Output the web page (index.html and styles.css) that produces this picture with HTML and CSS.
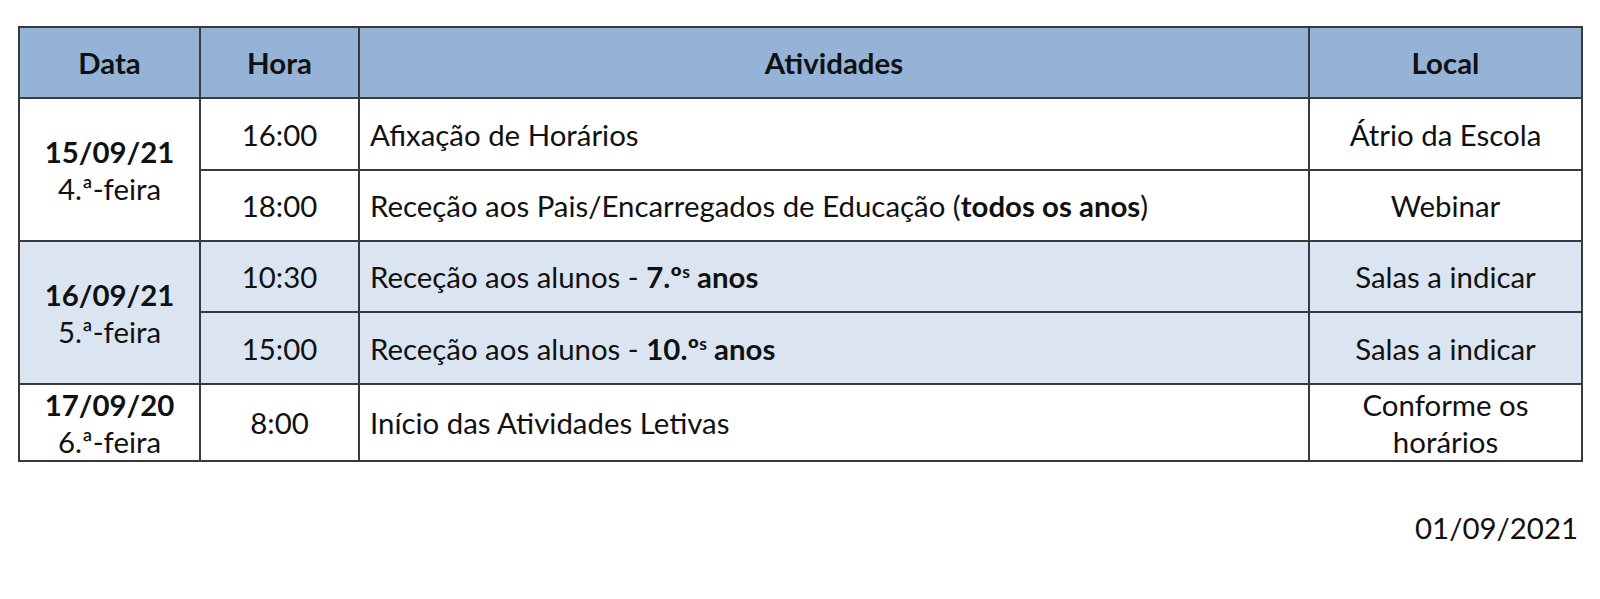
FILE: index.html
```html
<!DOCTYPE html>
<html lang="pt">
<head>
<meta charset="utf-8">
<title>Calendário</title>
<link rel="stylesheet" href="styles.css">
</head>
<body>
<div class="page">
  <table class="schedule">
    <colgroup>
      <col class="c-data">
      <col class="c-hora">
      <col class="c-ativ">
      <col class="c-local">
    </colgroup>
    <thead>
      <tr class="head">
        <th>Data</th>
        <th>Hora</th>
        <th>Atividades</th>
        <th>Local</th>
      </tr>
    </thead>
    <tbody>
      <tr class="r1">
        <td class="date" rowspan="2"><b>15/09/21</b><br>4.ª-feira</td>
        <td class="center">16:00</td>
        <td class="act">Afixação de Horários</td>
        <td class="center">Átrio da Escola</td>
      </tr>
      <tr class="r2">
        <td class="center">18:00</td>
        <td class="act">Receção aos Pais/Encarregados de Educação (<b>todos os anos</b>)</td>
        <td class="center">Webinar</td>
      </tr>
      <tr class="r3 shade">
        <td class="date" rowspan="2"><b>16/09/21</b><br>5.ª-feira</td>
        <td class="center">10:30</td>
        <td class="act">Receção aos alunos - <b>7.º<sup>s</sup> anos</b></td>
        <td class="center">Salas a indicar</td>
      </tr>
      <tr class="r4 shade">
        <td class="center">15:00</td>
        <td class="act">Receção aos alunos - <b>10.º<sup>s</sup> anos</b></td>
        <td class="center">Salas a indicar</td>
      </tr>
      <tr class="r5">
        <td class="date"><b>17/09/20</b><br>6.ª-feira</td>
        <td class="center">8:00</td>
        <td class="act">Início das Atividades Letivas</td>
        <td class="center">Conforme os horários</td>
      </tr>
    </tbody>
  </table>
  <div class="stamp">01/09/2021</div>
</div>
</body>
</html>
```

FILE: styles.css
```css
html, body {
  margin: 0;
  padding: 0;
  background: #ffffff;
}

body {
  font-family: Lato, "Liberation Sans", sans-serif;
  color: #111111;
  font-size: 29.4px;
}

.page {
  padding: 26px 19px 0 18px;
}

.schedule {
  border-collapse: collapse;
  table-layout: fixed;
  width: 1563px;
}

.c-data { width: 181px; }
.c-hora { width: 159px; }
.c-ativ { width: 950px; }
.c-local { width: 273px; }

.schedule th,
.schedule td {
  border: 2px solid #3a3a3a;
  padding: 0 10px;
  line-height: 37px;
  vertical-align: middle;
}

.schedule th {
  background: #95b3d7;
  font-weight: 700;
  text-align: center;
}

.head { height: 71px; }
.r1 { height: 72px; }
.r2 { height: 71px; }
.r3 { height: 71px; }
.r4 { height: 72px; }
.r5 { height: 77px; }

.shade td { background: #dbe5f1; }

.center,
.date {
  text-align: center;
}

.date b { font-weight: 700; }

.act { text-align: left; }

sup {
  font-size: 0.6em;
  line-height: 0;
  vertical-align: 0.55em;
}

.stamp {
  text-align: right;
  margin-top: 47px;
  padding-right: 3px;
  line-height: 37px;
}
```
